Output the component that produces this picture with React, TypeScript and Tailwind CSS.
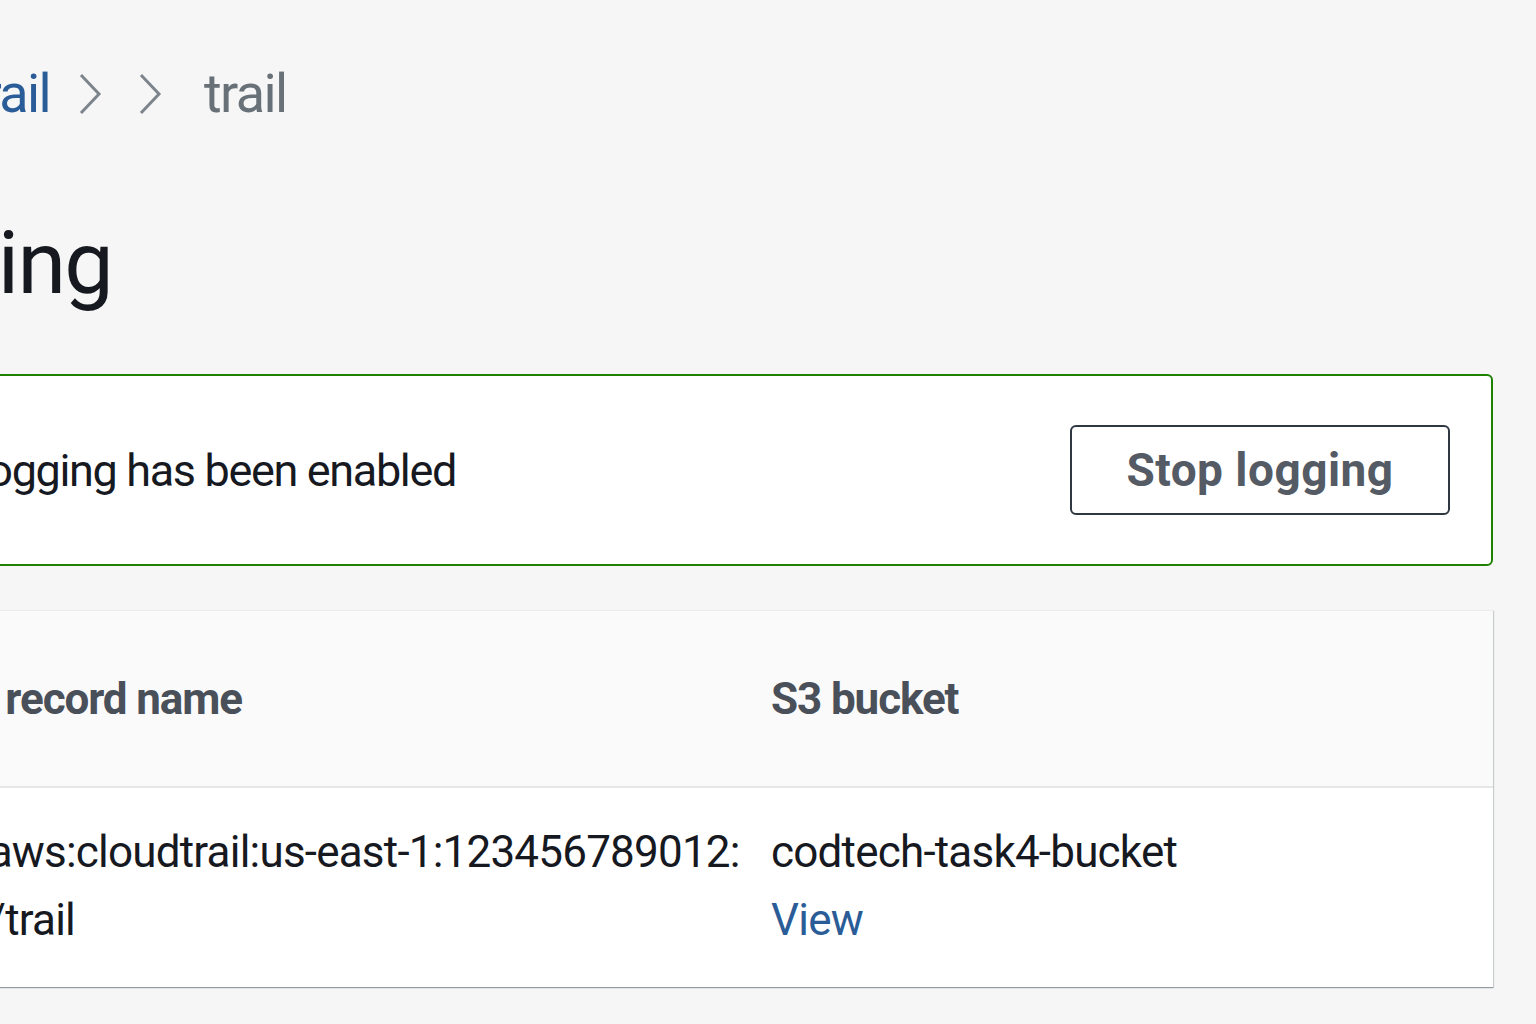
import React from 'react';

function Chevron() {
    return (
        <svg width="24" height="42" viewBox="0 0 24 42" fill="none" className="shrink-0">
            <polyline points="3,2 21,21 3,40" stroke="#7d848c" strokeWidth="3" />
        </svg>
    );
}

export default function TrailDetails() {
    return (
        <div className="min-h-screen bg-[#f6f6f6] overflow-hidden font-['Roboto',sans-serif] text-[#16191f]">
            <div className="ml-[-120px] w-[1613px]">
                {/* breadcrumb */}
                <nav className="mt-[64px] h-[60px] flex items-center text-[54px] leading-[60px] tracking-[-0.03em]">
                    <a href="#" className="flex w-[170px] justify-end whitespace-nowrap text-[#2a5c97]">CloudTrail</a>
                    <span className="ml-[28px]"><Chevron /></span>
                    <span className="ml-[36px]"><Chevron /></span>
                    <span className="ml-[42px] text-[#687078]">trail</span>
                </nav>

                <h1 className="mt-[95px] flex w-[232px] justify-end whitespace-nowrap text-[88px] leading-none tracking-[-0.02em]">
                    Logging
                </h1>

                {/* status alert */}
                <div className="mt-[67px] h-[192px] flex items-center justify-between border-2 border-[#1d8102] rounded-r-[6px] bg-white pr-[41px]">
                    <p className="flex w-[574px] justify-end whitespace-nowrap text-[45px] leading-none tracking-[-0.03em]">
                        Logging has been enabled
                    </p>
                    <button className="w-[380px] h-[90px] border-2 border-[#2f3742] rounded-[6px] text-[46px] leading-none font-bold text-[#545b64] tracking-[0.01em]">
                        Stop logging
                    </button>
                </div>

                {/* details table */}
                <div className="mt-[44px] bg-white border-t border-[#e9ebed] shadow-[0_1px_1px_0_rgba(0,28,36,0.3),1px_1px_1px_0_rgba(0,28,36,0.15)]">
                    <div className="h-[177px] flex items-center bg-[#fafafa] border-b-2 border-[#e4e6e8] text-[44px] leading-none font-bold text-[#4a5059] tracking-[-0.025em]">
                        <div className="w-[891px]">
                            <span className="flex w-[362px] justify-end whitespace-nowrap">Log record name</span>
                        </div>
                        <div>S3 bucket</div>
                    </div>
                    <div className="h-[199px] pt-[30px] flex text-[44px] leading-[68px] tracking-[-0.018em]">
                        <div className="w-[891px] pl-[38px]">
                            <div className="whitespace-nowrap">arn:aws:cloudtrail:us-east-1:123456789012:</div>
                            <div className="whitespace-nowrap">trail/trail</div>
                        </div>
                        <div>
                            <div>codtech-task4-bucket</div>
                            <a href="#" className="block text-[#2a5c97]">View</a>
                        </div>
                    </div>
                </div>
            </div>
        </div>
    );
}
